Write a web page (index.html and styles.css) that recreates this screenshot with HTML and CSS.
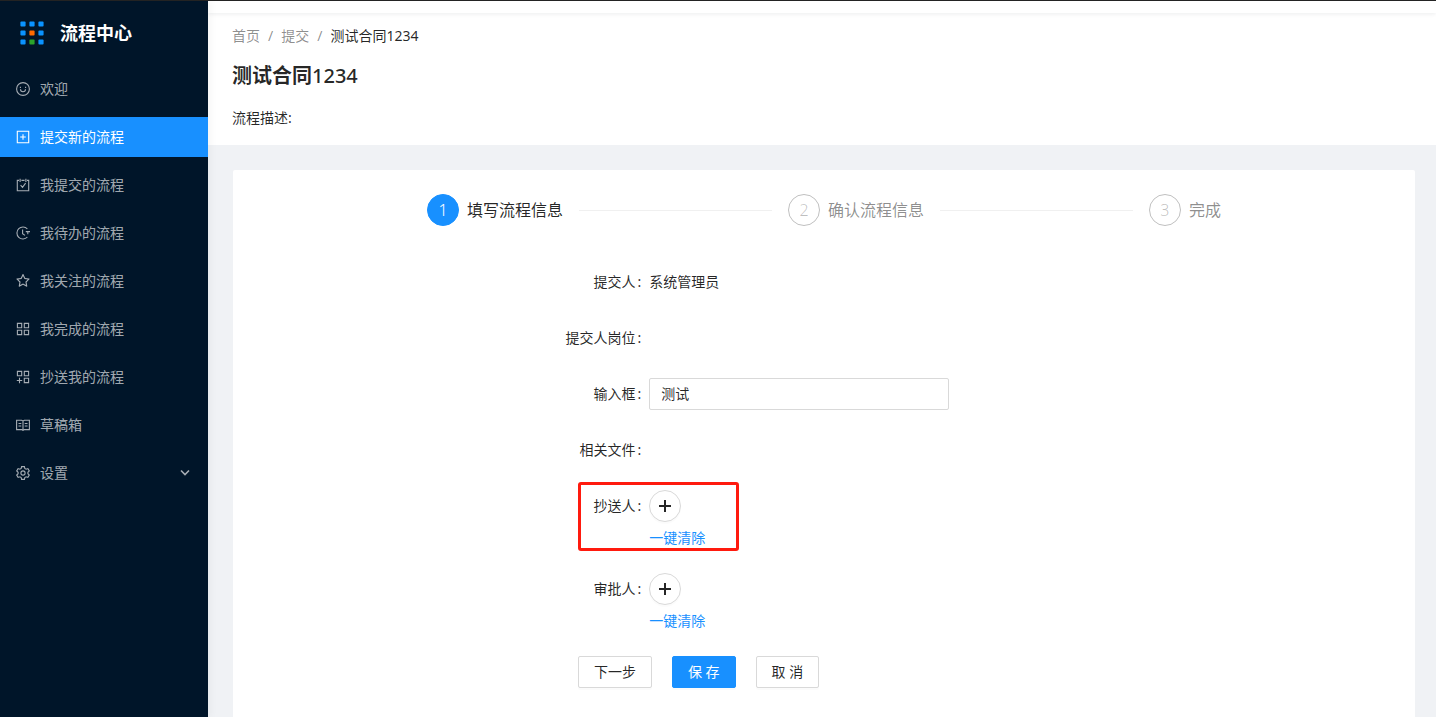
FILE: index.html
```html
<!DOCTYPE html>
<html lang="zh-CN">
<head>
    <meta charset="UTF-8">
    <meta name="viewport" content="width=device-width, initial-scale=1.0">
    <title>测试合同1234 - 流程中心</title>
    <link rel="stylesheet" href="styles.css">
</head>
<body>
    <aside class="sidebar">
        <a href="#" class="logo">
            <svg width="24" height="24" viewBox="0 0 24 24">
                <g fill="#0a93ff">
                    <rect x=".4" y=".4" width="5.2" height="5.2" rx="1"/>
                    <rect x="9.4" y=".4" width="5.2" height="5.2" rx="1"/>
                    <rect x="18.4" y=".4" width="5.2" height="5.2" rx="1"/>
                    <rect x=".4" y="9.4" width="5.2" height="5.2" rx="1"/>
                    <rect x="18.4" y="9.4" width="5.2" height="5.2" rx="1"/>
                    <rect x=".4" y="18.4" width="5.2" height="5.2" rx="1"/>
                    <rect x="18.4" y="18.4" width="5.2" height="5.2" rx="1"/>
                </g>
                <rect x="9.4" y="9.4" width="5.2" height="5.2" rx="1" fill="#ff6a00"/>
                <rect x="9.4" y="18.4" width="5.2" height="5.2" rx="1" fill="#2ba32b"/>
            </svg>
            <h1>流程中心</h1>
        </a>
        <nav class="menu">
            <a href="#" class="menu-item">
                <svg class="icon" viewBox="0 0 14 14"><circle cx="7" cy="7" r="6.4"/><path d="M4.5 7.2a2.5 2.5 0 0 0 5 0M4.4 4.8v1.2M9.6 4.8v1.2"/></svg>
                <span>欢迎</span>
            </a>
            <a href="#" class="menu-item active">
                <svg class="icon" viewBox="0 0 14 14"><path d="M1.3 1.3h11.4v11.4H1.3zM7 4.2v5.6M4.2 7h5.6"/></svg>
                <span>提交新的流程</span>
            </a>
            <a href="#" class="menu-item">
                <svg class="icon" viewBox="0 0 14 14"><path d="M3 2.4H1.3v10.3h11.4V2.4H11M5.4 2.4h3.2M4.1 .7v3.2M9.9 .7v3.2M4.6 7.2l1.9 2.2 3.1-4.2"/></svg>
                <span>我提交的流程</span>
            </a>
            <a href="#" class="menu-item">
                <svg class="icon" viewBox="0 0 14 14"><path d="M11.4 3a6 6 0 1 0 0 8M6.6 3.4v4.2l2.4 1.8M9.8 5.6H14M11.8 5.4v2.8"/></svg>
                <span>我待办的流程</span>
            </a>
            <a href="#" class="menu-item">
                <svg class="icon icon-fill" viewBox="64 64 896 896"><path d="M908.1 353.1l-253.9-36.9L540.7 86.1c-3.1-6.3-8.2-11.4-14.5-14.5-15.8-7.8-35-1.3-42.9 14.5L369.8 316.2l-253.9 36.9c-7 1-13.4 4.3-18.3 9.3a32.05 32.05 0 00.6 45.3l183.7 179.1-43.4 252.9a31.95 31.95 0 0046.4 33.7L512 754l227.1 119.4c6.2 3.3 13.4 4.4 20.3 3.2 17.4-3 29.1-19.5 26.1-36.9l-43.4-252.9 183.7-179.1c5-4.9 8.3-11.3 9.3-18.3 2.7-17.5-9.5-33.7-27-36.3zM664.8 561.6l36.1 210.3L512 672.7 323.1 772l36.1-210.3-152.8-149L417.6 382 512 190.7 606.4 382l211.2 30.7-152.8 148.9z"/></svg>
                <span>我关注的流程</span>
            </a>
            <a href="#" class="menu-item">
                <svg class="icon" viewBox="0 0 14 14"><path d="M1.4 1.4h4.3v4.3H1.4zM8.3 1.4h4.3v4.3H8.3zM1.4 8.3h4.3v4.3H1.4zM8.3 8.3h4.3v4.3H8.3z"/></svg>
                <span>我完成的流程</span>
            </a>
            <a href="#" class="menu-item">
                <svg class="icon" viewBox="0 0 14 14"><path d="M1.4 1.4h4.3v4.3H1.4zM8.3 1.4h4.3v4.3H8.3zM8.3 8.3h4.3v4.3H8.3zM3.5 7.8v5.4M.8 10.5h5.4"/></svg>
                <span>抄送我的流程</span>
            </a>
            <a href="#" class="menu-item">
                <svg class="icon" viewBox="0 0 14 14"><path d="M.6 2.2h5L7 2.9l1.4-.7h5v9.4h-5L7 12.3l-1.4-.7h-5zM7 2.9v9.4M2.5 5.5h2.8M2.5 8h2.8M8.7 5.5h2.8M8.7 8h2.8"/></svg>
                <span>草稿箱</span>
            </a>
            <a href="#" class="menu-item">
                <svg class="icon" viewBox="0 0 14 14"><path d="M5.6 .6h2.8l.4 1.8 1.3.8 1.8-.6 1.4 2.4-1.4 1.3v1.4l1.4 1.3-1.4 2.4-1.8-.6-1.3.8-.4 1.8H5.6l-.4-1.8-1.3-.8-1.8.6L.7 9l1.4-1.3V6.3L.7 5l1.4-2.4 1.8.6 1.3-.8z"/><circle cx="7" cy="7" r="2.1"/></svg>
                <span>设置</span>
                <svg class="arrow" viewBox="0 0 10 10"><path d="M1 2.5l4 4 4-4"/></svg>
            </a>
        </nav>
    </aside>

    <div class="main">
        <div class="topbar"></div>
        <header class="page-header">
            <nav class="breadcrumb">
                <a href="#">首页</a>
                <span class="separator">/</span>
                <a href="#">提交</a>
                <span class="separator">/</span>
                <span class="current">测试合同1234</span>
            </nav>
            <h2>测试合同<span class="number">1234</span></h2>
            <p>流程描述:</p>
        </header>

        <main class="content">
            <section class="card">
                <ol class="steps">
                    <li class="step active"><span class="step-icon">1</span><span>填写流程信息</span></li>
                    <li class="step"><span class="step-icon">2</span><span>确认流程信息</span></li>
                    <li class="step"><span class="step-icon">3</span><span>完成</span></li>
                </ol>

                <form class="form">
                    <div class="form-row">
                        <span class="label">提交人</span>
                        <span class="value">系统管理员</span>
                    </div>
                    <div class="form-row">
                        <span class="label">提交人岗位</span>
                    </div>
                    <div class="form-row">
                        <label class="label" for="inputBox">输入框</label>
                        <input type="text" id="inputBox" value="测试">
                    </div>
                    <div class="form-row">
                        <span class="label">相关文件</span>
                    </div>
                    <div class="form-row">
                        <span class="label">抄送人</span>
                        <div class="picker">
                            <button type="button" class="add-btn" aria-label="添加抄送人">
                                <svg width="12" height="12" viewBox="0 0 12 12"><path d="M6 0v12M0 6h12"/></svg>
                            </button>
                            <a href="#">一键清除</a>
                        </div>
                        <div class="highlight"></div>
                    </div>
                    <div class="form-row">
                        <span class="label">审批人</span>
                        <div class="picker">
                            <button type="button" class="add-btn" aria-label="添加审批人">
                                <svg width="12" height="12" viewBox="0 0 12 12"><path d="M6 0v12M0 6h12"/></svg>
                            </button>
                            <a href="#">一键清除</a>
                        </div>
                    </div>
                    <div class="actions">
                        <button type="button" class="btn">下一步</button>
                        <button type="submit" class="btn btn-primary">保 存</button>
                        <button type="button" class="btn">取 消</button>
                    </div>
                </form>
            </section>
        </main>
    </div>
</body>
</html>
```

FILE: styles.css
```css
* {
    margin: 0;
    padding: 0;
    box-sizing: border-box;
}

body {
    display: flex;
    min-height: 100vh;
    border-top: 1px solid #232323;
    background: #f0f2f5;
    color: rgba(0, 0, 0, .85);
    font-family: "Noto Sans", "Noto Sans CJK SC", sans-serif;
    font-size: 14px;
    line-height: 22px;
}

a {
    color: #1890ff;
    text-decoration: none;
}

button,
input {
    font: inherit;
    color: inherit;
}

/* Sidebar */
.sidebar {
    position: relative;
    z-index: 1;
    flex: 0 0 208px;
    background: #001529;
    box-shadow: 2px 0 8px rgba(29, 35, 41, .05);
}

.logo {
    display: flex;
    align-items: center;
    gap: 16px;
    height: 64px;
    padding-left: 20px;
}

.logo h1 {
    color: #fff;
    font-size: 18px;
    font-weight: 700;
    line-height: 32px;
}

.menu {
    display: flex;
    flex-direction: column;
    gap: 8px;
    padding-top: 4px;
}

.menu-item {
    display: flex;
    align-items: center;
    gap: 10px;
    height: 40px;
    padding: 0 18px 0 16px;
    color: rgba(255, 255, 255, .65);
}

.menu-item:hover {
    color: #fff;
}

.menu-item.active {
    background: #1890ff;
    color: #fff;
}

.icon {
    width: 14px;
    height: 14px;
    fill: none;
    stroke: currentColor;
    stroke-width: 1.1;
}

.icon-fill {
    fill: currentColor;
    stroke: none;
}

.arrow {
    width: 10px;
    height: 10px;
    margin-left: auto;
    fill: none;
    stroke: currentColor;
    stroke-width: 1.6;
}

/* Page header */
.main {
    flex: 1;
    display: flex;
    flex-direction: column;
    min-width: 0;
}

.topbar {
    position: relative;
    height: 12px;
    background: #fff;
    box-shadow: 0 1px 4px rgba(0, 21, 41, .08);
}

.page-header {
    padding: 12px 24px 16px;
    background: #fff;
}

.breadcrumb {
    display: flex;
    gap: 8px;
}

.breadcrumb a,
.separator {
    color: rgba(0, 0, 0, .45);
}

.page-header h2 {
    margin: 13px 0 15px;
    font-size: 20px;
    font-weight: 700;
    line-height: 32px;
}

.number {
    font-weight: 500;
}

/* Content */
.content {
    flex: 1;
    display: flex;
    padding: 25px 21px 0 25px;
}

.card {
    flex: 1;
    padding: 24px;
    background: #fff;
    border-radius: 2px 2px 0 0;
}

.steps {
    display: flex;
    gap: 16px;
    width: 70%;
    margin: 0 auto 40px;
    list-style: none;
}

.step {
    flex: 1;
    display: flex;
    align-items: center;
    gap: 8px;
    color: rgba(0, 0, 0, .45);
    font-size: 16px;
    line-height: 32px;
    white-space: nowrap;
}

.step::after {
    content: "";
    flex: 1;
    height: 1px;
    margin-left: 8px;
    background: #f0f0f0;
}

.step:last-child {
    flex: none;
}

.step:last-child::after {
    display: none;
}

.step.active {
    color: rgba(0, 0, 0, .85);
}

.step-icon {
    width: 32px;
    height: 32px;
    border: 1px solid rgba(0, 0, 0, .25);
    border-radius: 50%;
    color: rgba(0, 0, 0, .25);
    font-weight: 300;
    line-height: 30px;
    text-align: center;
}

.step.active .step-icon {
    background: #1890ff;
    border-color: #1890ff;
    color: #fff;
}

/* Form */
.form {
    width: 70%;
    margin: 0 auto;
}

.form-row {
    position: relative;
    display: grid;
    grid-template-columns: 28% 1fr;
    margin-bottom: 24px;
    line-height: 32px;
}

.label {
    padding-right: 8px;
    text-align: right;
}

.label::after {
    content: ":";
    margin-left: 2px;
}

.form-row input {
    width: 300px;
    height: 32px;
    padding: 0 11px;
    border: 1px solid #d9d9d9;
    border-radius: 2px;
    outline: none;
}

.form-row input:focus {
    border-color: #40a9ff;
}

.picker {
    display: flex;
    flex-direction: column;
    align-items: flex-start;
    gap: 5px;
    line-height: 22px;
}

.add-btn {
    display: flex;
    align-items: center;
    justify-content: center;
    width: 32px;
    height: 32px;
    background: #fff;
    border: 1px solid #d9d9d9;
    border-radius: 50%;
    box-shadow: 0 2px 0 rgba(0, 0, 0, .015);
    cursor: pointer;
}

.add-btn svg {
    stroke: currentColor;
    stroke-width: 2;
}

/* Red frame over the highlighted row */
.highlight {
    position: absolute;
    top: -8px;
    left: 19%;
    width: 161px;
    height: 69px;
    border: 3px solid #ff1a0e;
    border-radius: 3px;
    pointer-events: none;
}

.actions {
    display: flex;
    gap: 20px;
    padding-left: 19%;
}

.btn {
    height: 32px;
    padding: 0 15px;
    background: #fff;
    border: 1px solid #d9d9d9;
    border-radius: 2px;
    box-shadow: 0 2px 0 rgba(0, 0, 0, .015);
    cursor: pointer;
}

.btn-primary {
    background: #1890ff;
    border-color: #1890ff;
    color: #fff;
}
```
